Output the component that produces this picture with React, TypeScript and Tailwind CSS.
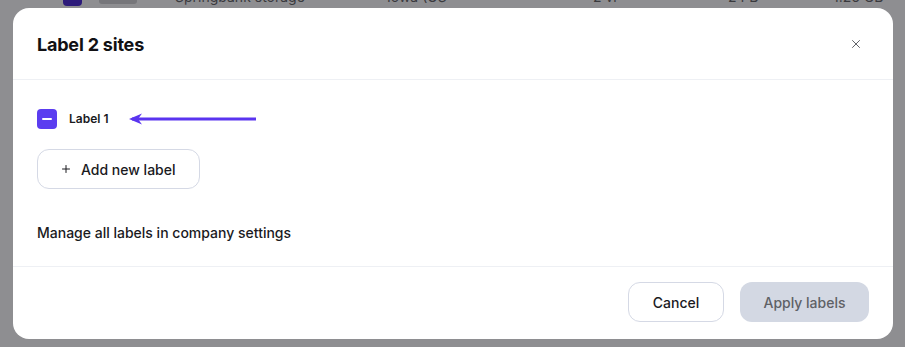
import { X, Plus } from "lucide-react";

export default function App() {
  return (
    <div
      className="relative w-[905px] h-[347px] overflow-hidden bg-[#8e8e91]"
      style={{ fontFamily: "Inter, 'Noto Sans', sans-serif" }}
    >
      {/* table row peeking out behind the overlay */}
      <div className="flex items-center h-[20px] -mt-[14px] text-[14px] text-[#3a3a3e] whitespace-nowrap">
        <div className="ml-[63px] w-[19px] h-[19px] rounded-[4px] bg-[#2c1a7a]" />
        <div className="ml-[17px] w-[38px] h-[16px] rounded-[3px] bg-[#76767a]" />
        <span className="ml-[38px] w-[212px]">Springbank storage</span>
        <span className="w-[206px]">Iowa (US</span>
        <span className="w-[135px]">2 vi</span>
        <span className="w-[105px]">24 B</span>
        <span>1.26 GB</span>
      </div>

      <div className="absolute left-[13px] top-[8px] w-[880px] h-[331px] bg-white rounded-[16px] flex flex-col">
        <div className="flex items-center justify-between h-[72px] px-[24px] pt-[2px] border-b border-[#eef0f4]">
          <h1 className="text-[18px] font-bold text-[#111114] tracking-[-0.2px]">Label 2 sites</h1>
          <X className="w-[14px] h-[14px] text-[#55575c] mr-[6px] -mt-[2px]" strokeWidth={1.6} />
        </div>

        <div className="flex-1 px-[24px] pt-[29px] border-b border-[#eef0f4]">
          <div className="flex items-center h-[20px]">
            <div className="w-[20px] h-[20px] rounded-[4px] bg-[#5b3df0] flex items-center justify-center">
              <div className="w-[10px] h-[2px] bg-white rounded-[1px]" />
            </div>
            <span className="ml-[12px] text-[12px] font-semibold text-[#1a1a1e]">Label 1</span>
            <svg className="ml-[19px]" width="130" height="14" viewBox="0 0 130 14">
              <path d="M4 7 L128 7" stroke="#5a34f0" strokeWidth="3" />
              <path d="M1 7 L14 1.5 L10 7 L14 12.5 Z" fill="#5a34f0" />
            </svg>
          </div>

          <button className="mt-[20px] flex items-center h-[40px] w-[163px] pl-[22px] rounded-[12px] border border-[#d5d9e5] text-[14px] font-medium text-[#1a1a1e]">
            <Plus className="w-[12px] h-[12px]" strokeWidth={2} />
            <span className="ml-[9px]">Add new label</span>
          </button>

          <p className="mt-[33px] text-[14px] font-medium text-[#1a1a1e]">
            Manage all labels in company settings
          </p>
        </div>

        <div className="flex items-center justify-end gap-[16px] h-[72px] px-[24px] pb-[2px]">
          <button className="h-[40px] w-[96px] rounded-[12px] border border-[#d5d9e5] text-[14px] font-medium text-[#1a1a1e]">
            Cancel
          </button>
          <button className="h-[40px] w-[129px] rounded-[12px] bg-[#d3d8e3] text-[14px] font-medium text-[#5f6166]">
            Apply labels
          </button>
        </div>
      </div>
    </div>
  );
}
